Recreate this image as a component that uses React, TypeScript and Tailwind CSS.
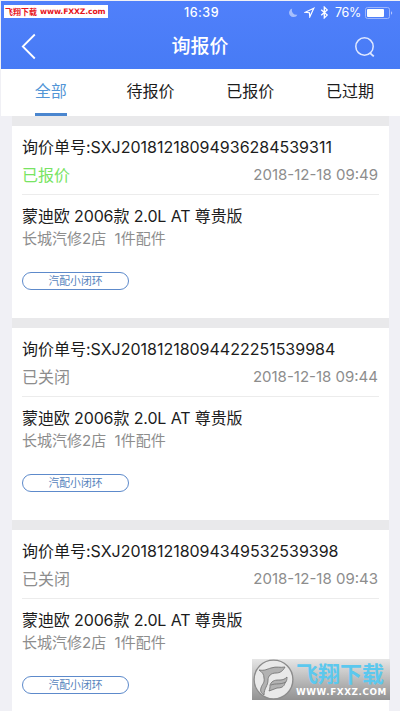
type Quote = {
  no: string;
  status: string;
  quoted: boolean;
  time: string;
};

const TABS = ["全部", "待报价", "已报价", "已过期"];

const QUOTES: Quote[] = [
  { no: "SXJ20181218094936284539311", status: "已报价", quoted: true, time: "2018-12-18 09:49" },
  { no: "SXJ20181218094422251539984", status: "已关闭", quoted: false, time: "2018-12-18 09:44" },
  { no: "SXJ20181218094349532539398", status: "已关闭", quoted: false, time: "2018-12-18 09:43" },
];

function StatusBar() {
  return (
    <div className="flex h-[23px] items-center pr-[7px] text-[12.5px] text-white">
      <div className="ml-[3px] mt-[-3px] flex h-[13px] w-[104px] items-center gap-[3px] bg-white pl-px pt-px text-[#e8141c]">
        <span className="w-[32px] whitespace-nowrap text-[8px] font-bold leading-none">飞翔下载</span>
        <span className="whitespace-nowrap font-['DejaVu_Sans','Noto_Sans_CJK_SC',sans-serif] text-[7.7px] font-bold leading-none tracking-[-0.15px]">www.FXXZ.com</span>
      </div>
      <span className="ml-[76px] pt-px font-medium tracking-[0.5px]">16:39</span>
      <div className="ml-auto flex items-center">
        <svg className="h-[10px] w-[10px] opacity-50" viewBox="0 0 10 10">
          <path d="M4.2.5a4.4 4.4 0 1 0 5.2 6.2A4.6 4.6 0 0 1 4.2.5z" fill="#fff" />
        </svg>
        <svg className="ml-[6px] h-[11px] w-[11px]" viewBox="0 0 11 11">
          <path d="M9.8 1.2 1.2 5.3l4.2.4.4 4.2z" fill="none" stroke="#fff" strokeWidth="1.2" />
        </svg>
        <svg className="ml-[5px] h-[13px] w-[9px]" viewBox="0 0 9 13">
          <path d="m1.2 3.7 6 5.4-2.9 2.8V1.1l2.9 2.8-6 5.4" fill="none" stroke="#fff" strokeWidth="1.3" />
        </svg>
        <span className="ml-[6px] pt-px text-[12.5px] tracking-[-0.3px]">76%</span>
        <svg className="ml-[4px] h-[12px] w-[28px]" viewBox="0 0 28 12">
          <rect x=".5" y=".5" width="24" height="11" rx="2" fill="none" stroke="#9db6fd" />
          <rect x="2" y="2" width="17" height="8" rx="1" fill="#fff" />
          <path d="M26 4.2c1.6.6 1.6 3 0 3.6z" fill="#b4c6ff" />
        </svg>
      </div>
    </div>
  );
}

function NavBar() {
  return (
    <div className="flex h-[45px] items-center justify-between pl-[20px] pr-[25px] text-white">
      <svg className="h-[27px] w-[15px]" viewBox="0 0 15 27">
        <path d="M13.8 1.5 1.8 13.5l12 12" fill="none" stroke="#fff" strokeWidth="1.8" />
      </svg>
      <h1 className="ml-[9px] text-[19px] font-medium leading-none">询报价</h1>
      <svg className="h-[20px] w-[20px]" viewBox="0 0 20 20">
        <circle cx="9.5" cy="9.5" r="8.7" fill="none" stroke="#dfe8ff" strokeWidth="1.5" />
        <path d="m14.8 15.8 4 3.6" fill="none" stroke="#dfe8ff" strokeWidth="1.8" />
      </svg>
    </div>
  );
}

function QuoteCard({ quote }: { quote: Quote }) {
  return (
    <div className="h-[192px] shrink-0 bg-white px-[10px] pt-[10px]">
      <div className="whitespace-nowrap text-[16px] leading-[22px] tracking-[-0.01px] text-[#1c1c1c]">
        询价单号:{quote.no}
      </div>
      <div className="mt-[3px] flex h-[28px] items-center justify-between text-[#8d8d8d]">
        <span className={quote.quoted ? "text-[16px] text-[#78e463]" : "text-[16px]"}>{quote.status}</span>
        <span className="pr-px pt-px text-[15px]">{quote.time}</span>
      </div>
      <div className="mt-[5px] border-t border-[#ececec]" />
      <div className="mt-[10px] text-[16px] leading-[22px] tracking-[-0.12px] text-[#1c1c1c]">蒙迪欧 2006款 2.0L AT 尊贵版</div>
      <div className="whitespace-pre text-[15px] leading-[23px] text-[#8d8d8d]">长城汽修2店  1件配件</div>
      <div className="mt-[22px] flex h-[18px] w-[107px] items-center justify-center rounded-full border border-[#5d8acb] pt-[2px] text-[10.8px] text-[#5684bd]">
        汽配小闭环
      </div>
    </div>
  );
}

function Watermark() {
  return (
    <div className="absolute left-[252px] top-[659px] flex h-[41px] w-[138px] items-center bg-gradient-to-b from-[#e6e6e6] to-[#929292]">
      <svg className="ml-px h-[41px] w-[41px] shrink-0" viewBox="0 0 41 41">
        <circle cx="20.5" cy="20.5" r="19.4" fill="#e9e9e9" stroke="#8c8c8c" strokeWidth="1.4" />
        <g fill="#b2b2b2" stroke="#777" strokeWidth=".9" strokeLinejoin="round">
          <path d="M11 36c-3-2-4-4-3-7 1-4 4-5 3-10 0-4-2-6-5-8 6 1 8-1 12-2 6-2 9 0 14-1-2 4-5 6-9 6-5 0-8 3-8 7 0 6-4 8-4 15z" />
          <path d="M17 26c2-5 6-5 10-5 3 0 5-1 7-3 0 4-1 5-2 6-1 4-4 5-8 5-3 1-5 2-8 3 1-2 1-4 1-6z" />
          <path d="M18 26c5-2 9 0 15-3" fill="none" />
        </g>
      </svg>
      <div className="ml-[2px] flex flex-col">
        <span className="whitespace-nowrap text-[22px] font-bold leading-[26px] text-[#5bc8ee]">飞翔下载</span>
        <span className="whitespace-nowrap font-['DejaVu_Sans',sans-serif] text-[8.8px] font-bold leading-[11px] tracking-[0.6px] text-white">
          WWW.FXXZ.COM
        </span>
      </div>
    </div>
  );
}

export default function App() {
  return (
    <div className="relative flex h-[711px] w-[400px] flex-col overflow-hidden bg-[#f0f0f5] pl-px font-['Inter','Noto_Sans_CJK_SC',sans-serif]">
      <header className="mt-px h-[68px] shrink-0 bg-gradient-to-b from-[#5080fb] to-[#477bf5]">
        <StatusBar />
        <NavBar />
      </header>

      <nav className="flex h-[47px] shrink-0 bg-white">
        {TABS.map((tab, i) => (
          <div key={tab} className="flex flex-1 justify-center">
            <div
              className={`flex h-[47px] items-center border-b-[3px] text-[16px] ${
                i === 0 ? "border-[#4a86cf] text-[#5295d6]" : "border-transparent text-[#1c1c1c]"
              }`}
            >
              {tab}
            </div>
          </div>
        ))}
      </nav>

      <main className="ml-[11px] flex w-[377px] flex-col gap-[10px] bg-[#e9e9eb] pt-[10px]">
        {QUOTES.map((q) => (
          <QuoteCard key={q.no} quote={q} />
        ))}
      </main>

      <Watermark />
    </div>
  );
}
